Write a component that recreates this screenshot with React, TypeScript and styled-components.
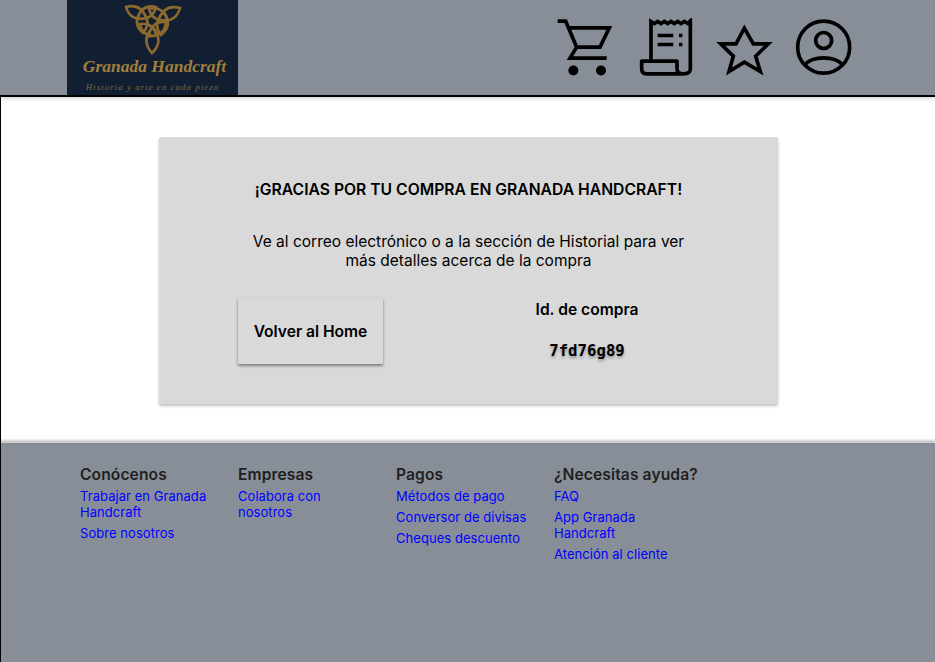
import styled, { createGlobalStyle } from "styled-components";

const GlobalStyle = createGlobalStyle`
  html, body {
    margin: 0;
    padding: 0;
    background: #ffffff;
  }
  body {
    font-family: Inter, "Liberation Sans", sans-serif;
  }
`;

const footerColumns = [
  {
    title: "Conócenos",
    links: ["Trabajar en Granada Handcraft", "Sobre nosotros"],
  },
  {
    title: "Empresas",
    links: ["Colabora con nosotros"],
  },
  {
    title: "Pagos",
    links: ["Métodos de pago", "Conversor de divisas", "Cheques descuento"],
  },
  {
    title: "¿Necesitas ayuda?",
    links: ["FAQ", "App Granada Handcraft", "Atención al cliente"],
  },
];

// one knot is three leaves, each going from behind the middle out to a tip
const knot = (tips: number[][]) => {
  const cx = (tips[0][0] + tips[1][0] + tips[2][0]) / 3;
  const cy = (tips[0][1] + tips[1][1] + tips[2][1]) / 3;
  return tips
    .map(([x, y]) => {
      const dx = x - cx;
      const dy = y - cy;
      const sx = (cx - dx * 0.3).toFixed(1);
      const sy = (cy - dy * 0.3).toFixed(1);
      const mx = cx + dx * 0.4;
      const my = cy + dy * 0.4;
      const a = `${(mx - dy * 0.6).toFixed(1)} ${(my + dx * 0.6).toFixed(1)}`;
      const b = `${(mx + dy * 0.6).toFixed(1)} ${(my - dx * 0.6).toFixed(1)}`;
      return `M${sx} ${sy} Q${a} ${x} ${y} Q${b} ${sx} ${sy}Z`;
    })
    .join(" ");
};

function KnotLogo() {
  return (
    <svg width="66" height="58" viewBox="0 0 66 58" fill="none" stroke="#8a6a2e" strokeWidth="2.6">
      <path d={knot([[6, 7], [36, 7], [23, 33]])} />
      <path d={knot([[29, 9], [60, 8], [41, 35]])} />
      <path d={knot([[20, 24], [46, 22], [32, 53]])} />
    </svg>
  );
}

function CartIcon() {
  return (
    <svg width="60" height="60" viewBox="30 37.5 180 180" fill="none" stroke="#000" strokeWidth="11">
      <path d="M38 47 H62 L95 125 H165 L193 67 H68" />
      <path d="M95 125 L75 158 H185" />
      <circle cx="85" cy="195" r="15" fill="#000" stroke="none" />
      <circle cx="168" cy="195" r="15" fill="#000" stroke="none" />
    </svg>
  );
}

function ReceiptIcon() {
  return (
    <svg width="60" height="60" viewBox="270 37.5 180 180" fill="none" stroke="#000" strokeWidth="11">
      <path d="M318 165 V48 L328 54 L338 48 L348 54 L358 48 L368 54 L378 48 L388 54 L398 48 L408 54 L418 48 L428 54 L436 46 V190 Q436 205 415 205" />
      <path d="M290 167 H396 V190 Q396 205 415 205 H305 Q290 205 290 190 Z" strokeLinejoin="round" />
      <path d="M338 90 H385 M338 117 H385" />
      <path d="M402 90 H412 M402 117 H412" />
    </svg>
  );
}

function StarIcon() {
  return (
    <svg width="60" height="60" viewBox="510 37.5 180 180" fill="none" stroke="#000" strokeWidth="11">
      <path d="M598 68 L625 115 H670 L632 152 L646 198 L598 170 L552 198 L565 152 L527 115 H573 Z" />
    </svg>
  );
}

function UserIcon() {
  return (
    <svg width="60" height="60" viewBox="750 37.5 180 180" fill="none" stroke="#000" strokeWidth="11">
      <circle cx="836" cy="125" r="78" />
      <circle cx="836" cy="105" r="24" />
      <path d="M778 178 C805 150 867 150 894 178" />
    </svg>
  );
}

export default function App() {
  return (
    <Page>
      <GlobalStyle />
      <Header>
        <Logo>
          <KnotLogo />
          <LogoName>Granada Handcraft</LogoName>
          <LogoTagline>Historia y arte en cada pieza</LogoTagline>
        </Logo>
        <IconBar>
          <CartIcon />
          <ReceiptIcon />
          <StarIcon />
          <UserIcon />
        </IconBar>
      </Header>
      <Main>
        <Card>
          <Thanks>¡GRACIAS POR TU COMPRA EN GRANADA HANDCRAFT!</Thanks>
          <Message>
            Ve al correo electrónico o a la sección de Historial para ver más detalles acerca de la compra
          </Message>
          <CardRow>
            <HomeButton>Volver al Home</HomeButton>
            <PurchaseInfo>
              <PurchaseLabel>Id. de compra</PurchaseLabel>
              <PurchaseCode>7fd76g89</PurchaseCode>
            </PurchaseInfo>
          </CardRow>
        </Card>
      </Main>
      <Footer>
        {footerColumns.map((column) => (
          <FooterColumn key={column.title}>
            <FooterTitle>{column.title}</FooterTitle>
            {column.links.map((link) => (
              <FooterLink key={link} href="#">
                {link}
              </FooterLink>
            ))}
          </FooterColumn>
        ))}
      </Footer>
    </Page>
  );
}

const Page = styled.div`
  width: 935px;
  height: 662px;
  display: flex;
  flex-direction: column;
  overflow: hidden;
`;

const Header = styled.header`
  position: relative;
  height: 97px;
  box-sizing: border-box;
  background-color: #888e98;
  border-bottom: 2px solid #000000;
  box-shadow: 0 2px 4px rgba(0, 0, 0, 0.15);
  padding: 0 80px 0 67px;
  display: flex;
  justify-content: space-between;
  flex-shrink: 0;
`;

const Logo = styled.div`
  width: 171px;
  height: 95px;
  background-color: #121f32;
  display: flex;
  flex-direction: column;
  align-items: center;
  overflow: hidden;
`;

const LogoName = styled.div`
  margin: -2px 0 0 4px;
  font-family: "Liberation Serif", serif;
  font-style: italic;
  font-weight: 700;
  font-size: 17.5px;
  line-height: 20px;
  color: #a17f3c;
  white-space: nowrap;
`;

const LogoTagline = styled.div`
  margin-top: 6px;
  font-family: "Liberation Serif", serif;
  font-style: italic;
  font-size: 9px;
  line-height: 11px;
  letter-spacing: 1px;
  color: #77683f;
  white-space: nowrap;
`;

const IconBar = styled.div`
  display: flex;
  align-items: center;
  gap: 20px;
  svg {
    flex-shrink: 0;
  }
`;

const Main = styled.main`
  height: 346px;
  flex-shrink: 0;
  padding-top: 40px;
  box-sizing: border-box;
  border-left: 1px solid #000000;
  display: flex;
  justify-content: center;
  background-color: #ffffff;
`;

const Card = styled.section`
  width: 619px;
  height: 267px;
  box-sizing: border-box;
  margin-left: 1px;
  padding: 44px 79px 0;
  background-color: #d9d9d9;
  border-radius: 2px;
  box-shadow: 0 2px 3px rgba(0, 0, 0, 0.25);
  display: flex;
  flex-direction: column;
  align-items: center;
`;

const Thanks = styled.h1`
  margin: 0;
  font-size: 15.7px;
  line-height: 18px;
  font-weight: 600;
  color: #000000;
  white-space: nowrap;
`;

const Message = styled.p`
  margin: 33px 0 0;
  width: 450px;
  font-size: 15.5px;
  line-height: 19px;
  font-weight: 400;
  text-align: center;
  color: #000000;
`;

const CardRow = styled.div`
  margin-top: 28px;
  width: 100%;
  display: flex;
  align-items: flex-start;
  gap: 100px;
`;

const HomeButton = styled.button`
  width: 145px;
  height: 66px;
  flex-shrink: 0;
  border: none;
  border-radius: 1px;
  background-color: #d9d9d9;
  box-shadow: 0 2px 3px rgba(0, 0, 0, 0.4), 0 0 2px rgba(0, 0, 0, 0.12);
  font-family: Inter, "Liberation Sans", sans-serif;
  font-size: 15.6px;
  font-weight: 600;
  color: #000000;
`;

const PurchaseInfo = styled.div`
  width: 208px;
  padding-top: 3px;
  display: flex;
  flex-direction: column;
  align-items: center;
  gap: 23px;
`;

const PurchaseLabel = styled.div`
  font-size: 15.6px;
  line-height: 18px;
  font-weight: 600;
  color: #000000;
`;

const PurchaseCode = styled.div`
  font-family: "DejaVu Sans Mono", "Liberation Mono", monospace;
  font-size: 15.7px;
  line-height: 18px;
  font-weight: 700;
  color: #000000;
  text-shadow: 0 2px 3px rgba(0, 0, 0, 0.35);
`;

const Footer = styled.footer`
  position: relative;
  flex: 1;
  box-sizing: border-box;
  background-color: #888e98;
  border-left: 1px solid #000000;
  box-shadow: 0 -3px 2px rgba(0, 0, 0, 0.2);
  padding: 23px 0 0 79px;
  display: flex;
  align-items: flex-start;
`;

const FooterColumn = styled.div`
  width: 158px;
  display: flex;
  flex-direction: column;
  align-items: flex-start;
`;

const FooterTitle = styled.h2`
  margin: 0 0 5px;
  font-size: 15.6px;
  line-height: 18px;
  font-weight: 600;
  letter-spacing: 0.1px;
  color: #1f1f1f;
  white-space: nowrap;
`;

const FooterLink = styled.a`
  width: 132px;
  margin-bottom: 5.5px;
  font-size: 13px;
  line-height: 15.5px;
  letter-spacing: 0.05px;
  color: #0000ff;
  text-decoration: none;
`;
